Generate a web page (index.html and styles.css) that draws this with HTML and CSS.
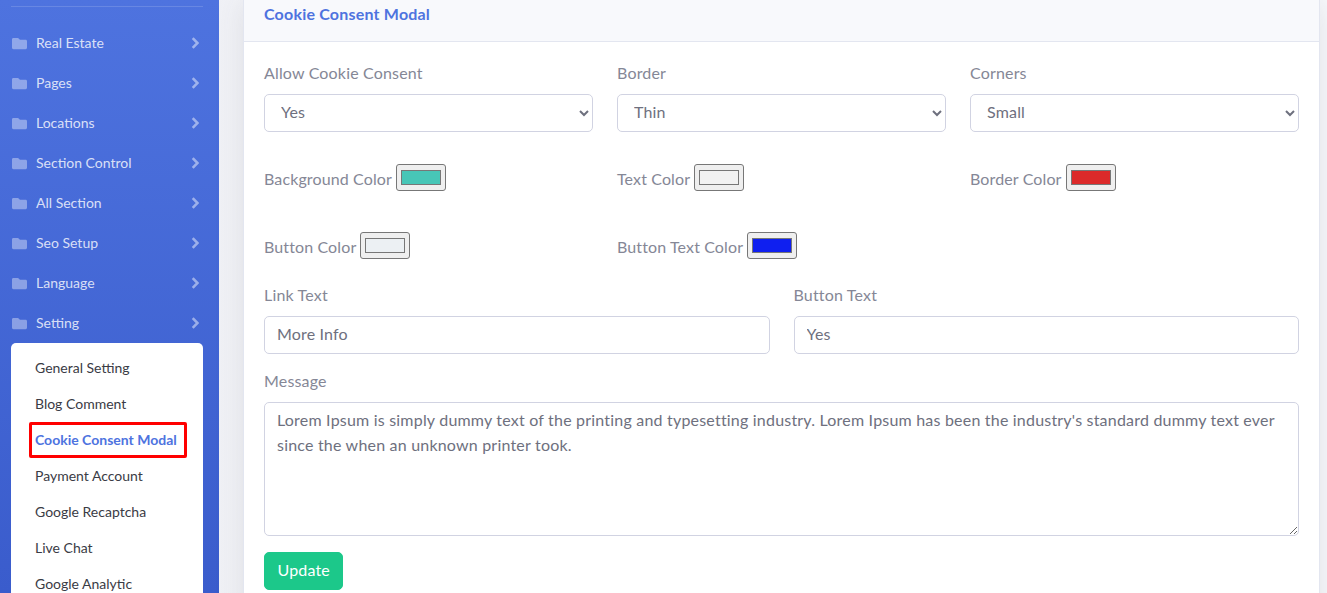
FILE: index.html
```html
<!DOCTYPE html>
<html lang="en">
<head>
    <meta charset="UTF-8">
    <meta name="viewport" content="width=device-width, initial-scale=1.0">
    <title>Cookie Consent Modal</title>
    <link rel="stylesheet" href="styles.css">
</head>
<body>
    <svg class="icon-defs" width="0" height="0">
        <symbol id="folder" viewBox="0 0 512 512"><path d="M464 128H272l-64-64H48C21.5 64 0 85.5 0 112v288c0 26.5 21.5 48 48 48h416c26.500 0 48-21.500 48-48V176c0-26.500-21.500-48-48-48z"/></symbol>
        <symbol id="chevron" viewBox="0 0 8 12"><path d="M1.700 1.200L6.500 6L1.700 10.800"/></symbol>
    </svg>
    <div class="wrapper">
        <aside class="sidebar">
            <hr class="sidebar-divider">
            <ul class="nav">
                <li class="nav-item"><svg class="nav-folder"><use href="#folder"/></svg><span>Real Estate</span><svg class="nav-arrow"><use href="#chevron"/></svg></li>
                <li class="nav-item"><svg class="nav-folder"><use href="#folder"/></svg><span>Pages</span><svg class="nav-arrow"><use href="#chevron"/></svg></li>
                <li class="nav-item"><svg class="nav-folder"><use href="#folder"/></svg><span>Locations</span><svg class="nav-arrow"><use href="#chevron"/></svg></li>
                <li class="nav-item"><svg class="nav-folder"><use href="#folder"/></svg><span>Section Control</span><svg class="nav-arrow"><use href="#chevron"/></svg></li>
                <li class="nav-item"><svg class="nav-folder"><use href="#folder"/></svg><span>All Section</span><svg class="nav-arrow"><use href="#chevron"/></svg></li>
                <li class="nav-item"><svg class="nav-folder"><use href="#folder"/></svg><span>Seo Setup</span><svg class="nav-arrow"><use href="#chevron"/></svg></li>
                <li class="nav-item"><svg class="nav-folder"><use href="#folder"/></svg><span>Language</span><svg class="nav-arrow"><use href="#chevron"/></svg></li>
                <li class="nav-item"><svg class="nav-folder"><use href="#folder"/></svg><span>Setting</span><svg class="nav-arrow"><use href="#chevron"/></svg></li>
            </ul>
            <div class="submenu">
                <a class="submenu-item">General Setting</a>
                <a class="submenu-item">Blog Comment</a>
                <a class="submenu-item active">Cookie Consent Modal</a>
                <a class="submenu-item">Payment Account</a>
                <a class="submenu-item">Google Recaptcha</a>
                <a class="submenu-item">Live Chat</a>
                <a class="submenu-item">Google Analytic</a>
            </div>
        </aside>
        <main class="content">
            <section class="card">
                <div class="card-header"><h6>Cookie Consent Modal</h6></div>
                <form class="card-body">
                    <div class="row-3">
                        <div class="field">
                            <label>Allow Cookie Consent</label>
                            <select class="control select"><option>Yes</option></select>
                        </div>
                        <div class="field">
                            <label>Border</label>
                            <select class="control select"><option>Thin</option></select>
                        </div>
                        <div class="field">
                            <label>Corners</label>
                            <select class="control select"><option>Small</option></select>
                        </div>
                    </div>
                    <div class="row-3 colors">
                        <div class="color-field"><label>Background Color</label><input type="color" value="#47c6b7"></div>
                        <div class="color-field"><label>Text Color</label><input type="color" value="#f2f2f2"></div>
                        <div class="color-field"><label>Border Color</label><input type="color" value="#dc2a2a"></div>
                    </div>
                    <div class="row-3 colors second">
                        <div class="color-field"><label>Button Color</label><input type="color" value="#ecf0f3"></div>
                        <div class="color-field"><label>Button Text Color</label><input type="color" value="#0f1ff0"></div>
                    </div>
                    <div class="row-2">
                        <div class="field">
                            <label>Link Text</label>
                            <input class="control" type="text" value="More Info">
                        </div>
                        <div class="field">
                            <label>Button Text</label>
                            <input class="control" type="text" value="Yes">
                        </div>
                    </div>
                    <div class="field message">
                        <label>Message</label>
                        <textarea class="control area">Lorem Ipsum is simply dummy text of the printing and typesetting industry. Lorem Ipsum has been the industry's standard dummy text ever since the when an unknown printer took.</textarea>
                    </div>
                    <button class="btn" type="button">Update</button>
                </form>
            </section>
        </main>
    </div>
</body>
</html>
```

FILE: styles.css
```css
* {
    box-sizing: border-box;
}
html, body {
    height: 593px;
    overflow: hidden;
}
body {
    margin: 0;
    font-family: Lato, "Open Sans", sans-serif;
    font-size: 16px;
    color: #858796;
    background-color: #f8f9fc;
}
.icon-defs {
    display: block;
    height: 0;
}
.wrapper {
    display: flex;
    height: 593px;
}
.sidebar {
    width: 219px;
    flex-shrink: 0;
    padding: 6px 16px 0 11px;
    background: linear-gradient(180deg, #4e73df 0%, #3a5ccc 100%);
    overflow: hidden;
}
.sidebar-divider {
    margin: 0 0 16px;
    border: 0;
    border-top: 1px solid rgba(255, 255, 255, 0.15);
}
.nav {
    margin: 0;
    padding: 0;
    list-style: none;
}
.nav-item {
    display: flex;
    align-items: center;
    height: 40px;
    font-size: 14px;
    color: rgba(255, 255, 255, 0.8);
}
.nav-item span {
    padding-bottom: 2px;
}
.nav-folder {
    width: 15px;
    height: 15px;
    margin: 0 9px 0 1px;
    fill: rgba(255, 255, 255, 0.38);
}
.nav-arrow {
    width: 8px;
    height: 12px;
    margin-left: auto;
    margin-right: 4px;
    fill: none;
    stroke: rgba(255, 255, 255, 0.47);
    stroke-width: 2.6;
}
.submenu {
    display: flex;
    flex-direction: column;
    height: 300px;
    padding: 7px 0 0 18px;
    background: #fff;
    border-radius: 5px;
}
.submenu-item {
    display: flex;
    align-items: center;
    width: 158px;
    height: 36px;
    padding-bottom: 2px;
    font-size: 14px;
    color: #3a3b45;
}
.submenu-item.active {
    padding-left: 3px;
    font-weight: 700;
    color: #4e73df;
    border: 3px solid #f00;
    border-radius: 2px;
}
.submenu-item:not(.active) {
    padding-left: 6px;
}
.content {
    flex: 1;
    padding: 0 7px 0 24px;
    background: linear-gradient(90deg, #f0f1f6 0, #f8f9fc 60px);
}
.card {
    height: 640px;
    background: #fff;
    border-left: 1px solid #e3e6f0;
    border-right: 1px solid #e3e6f0;
    box-shadow: 0 0 28px rgba(58, 59, 69, 0.12);
}
.card-header {
    height: 42px;
    padding: 5px 20px 0;
    background: #f8f9fc;
    border-bottom: 1px solid #e3e6f0;
}
.card-header h6 {
    margin: 0;
    font-size: 16px;
    line-height: 18px;
    font-weight: 700;
    letter-spacing: 0.2px;
    color: #4e73df;
}
.card-body {
    padding: 19px 20px 0;
    letter-spacing: 0.17px;
}
label {
    display: block;
    line-height: 24px;
}
.row-3 {
    display: grid;
    grid-template-columns: repeat(3, 1fr);
    column-gap: 24px;
}
.row-2 {
    display: grid;
    grid-template-columns: repeat(2, 1fr);
    column-gap: 24px;
    margin-top: 24px;
}
.field label {
    margin-bottom: 9px;
}
.control {
    display: block;
    width: 100%;
    height: 38px;
    padding: 4px 12px 8px;
    font-family: inherit;
    font-size: 16px;
    letter-spacing: inherit;
    color: #6e707e;
    background-color: #fff;
    border: 1px solid #d1d3e2;
    border-radius: 5px;
}
.colors {
    margin-top: 32px;
}
.colors.second {
    margin-top: 41px;
}
.color-field {
    display: flex;
    align-items: center;
    gap: 4px;
    height: 27px;
    letter-spacing: 0.12px;
}
.color-field label {
    margin: 0;
    position: relative;
    top: 1px;
}
.color-field input {
    width: 50px;
    height: 27px;
    padding: 1px 2px;
    border: 1px solid #777;
    border-radius: 3px;
    background: #efefef;
}
.color-field input::-webkit-color-swatch {
    border: 1px solid #777;
}
.message {
    margin-top: 15px;
}
.area {
    height: 134px;
    line-height: 25px;
    padding-top: 4px;
    letter-spacing: 0.2px;
}
.btn {
    display: block;
    height: 38px;
    margin-top: 16px;
    padding: 0 12.5px 3px;
    font-family: inherit;
    font-size: 16px;
    letter-spacing: inherit;
    color: #fff;
    background: #1cc88a;
    border: 1px solid #1cc88a;
    border-radius: 5px;
}
```
